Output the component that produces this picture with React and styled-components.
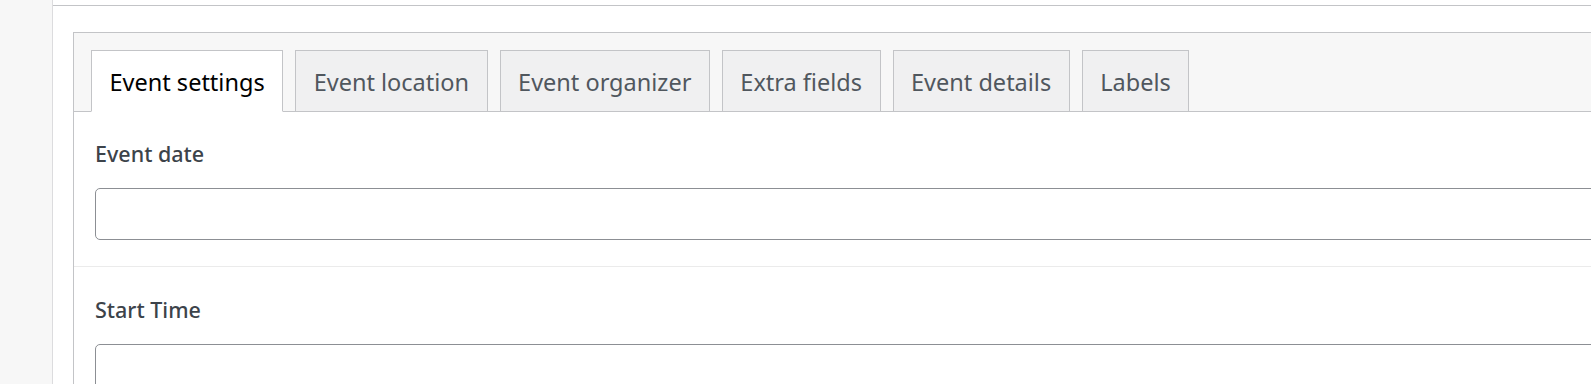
import React from "react";
import styled, { createGlobalStyle } from "styled-components";

const Global = createGlobalStyle`
  html, body { margin: 0; padding: 0; background: #fff; overflow: hidden; }
  body { font-family: "Noto Sans", "Open Sans", sans-serif; }
  * { box-sizing: border-box; }
`;

const Page = styled.div`
  display: flex;
  height: 384px;
  overflow: hidden;
`;

const Sidebar = styled.aside`
  flex: 0 0 53px;
  background: #f7f7f7;
  border-right: 1px solid #dcdcde;
`;

const Main = styled.main`
  flex: 1;
  min-width: 0;
  padding-top: 5px;
  overflow: hidden;
`;

const Content = styled.div`
  border-top: 1px solid #c3c4c7;
  padding: 26px 0 0 20px;
`;

const Panel = styled.div`
  width: calc(100% + 40px);
  border: 1px solid #c3c4c7;
  background: #fff;
`;

const TabBar = styled.nav`
  display: flex;
  gap: 12px;
  padding: 17px 0 0 17px;
  background: #f7f7f7;
  border-bottom: 1px solid #c3c4c7;
`;

const Tab = styled.button`
  font-family: "Noto Sans", "Open Sans", sans-serif;
  font-size: 23.5px;
  line-height: 33px;
  padding: 15px 17.5px 12px;
  margin-bottom: -1px;
  border: 1px solid #c3c4c7;
  border-bottom: ${(p) => (p.$active ? "1px solid #fff" : "1px solid #c3c4c7")};
  background: ${(p) => (p.$active ? "#fff" : "#f0f0f1")};
  color: ${(p) => (p.$active ? "#000" : "#50575e")};
  cursor: pointer;
  white-space: nowrap;
`;

const Section = styled.div`
  padding: ${(p) => p.$pad};
  border-top: ${(p) => (p.$divided ? "1px solid #ebebeb" : "none")};
`;

const Label = styled.label`
  display: block;
  font-size: 21.5px;
  font-weight: 500;
  color: #3c434a;
  line-height: 30px;
  margin-bottom: 19px;
`;

const Input = styled.input`
  display: block;
  width: calc(100% + 20px);
  height: 52px;
  border: 1px solid #8c8f94;
  border-radius: 5px;
  background: #fff;
  font-family: inherit;
  font-size: 20px;
  padding: 0 12px;
`;

const tabs = [
  "Event settings",
  "Event location",
  "Event organizer",
  "Extra fields",
  "Event details",
  "Labels",
];

export default function App() {
  return (
    <>
      <Global />
      <Page>
        <Sidebar />
        <Main>
          <Content>
            <Panel>
              <TabBar>
                {tabs.map((t, i) => (
                  <Tab key={t} $active={i === 0}>
                    {t}
                  </Tab>
                ))}
              </TabBar>
              <Section $pad="27px 0 26px 21px">
                <Label>Event date</Label>
                <Input type="text" />
              </Section>
              <Section $divided $pad="28px 0 25px 21px">
                <Label>Start Time</Label>
                <Input type="text" />
              </Section>
            </Panel>
          </Content>
        </Main>
      </Page>
    </>
  );
}
